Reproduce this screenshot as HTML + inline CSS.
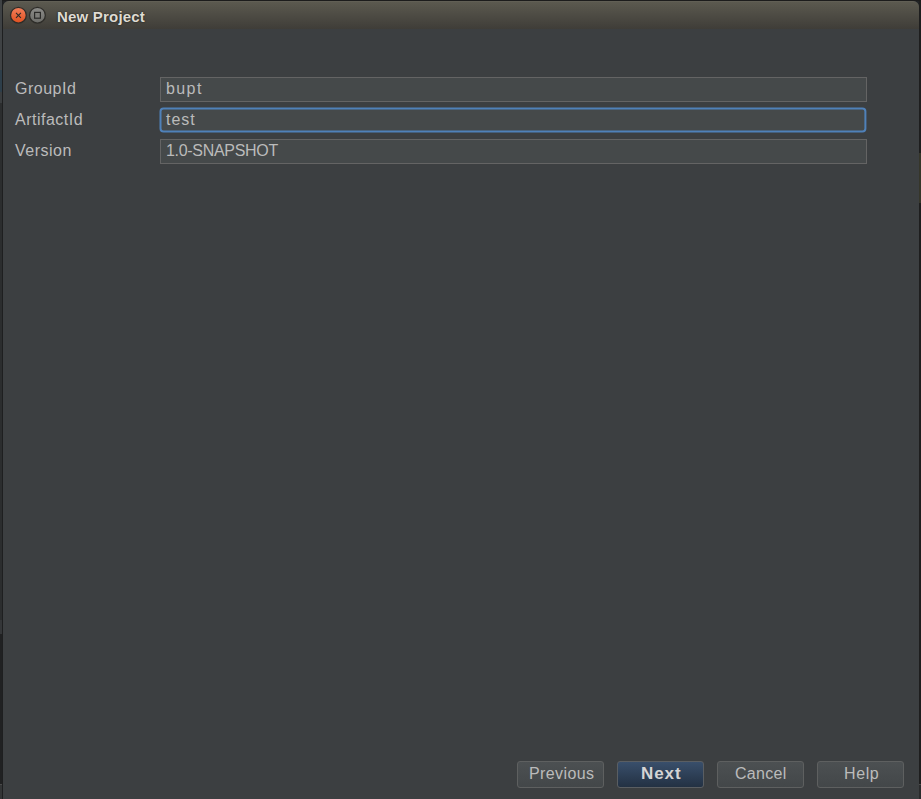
<!DOCTYPE html>
<html><head><meta charset="utf-8">
<style>
html,body{margin:0;padding:0;}
body{width:921px;height:799px;overflow:hidden;position:relative;background:#222426;font-family:"Liberation Sans",sans-serif;}
.a{position:absolute;}
.bgl{left:0;top:0;width:2px;height:799px;background:linear-gradient(#3f4244 0,#3f4244 70px,#2d3e4a 70px,#2d3e4a 92px,#3a3d3f 92px,#3a3d3f 103px,#2b2d2e 103px,#2b2d2e 620px,#343638 620px,#343638 634px,#202122 634px,#202122 784px,#4a4a4a 784px,#4a4a4a 785px,#333536 785px);}
.bgl2{left:2px;top:0;width:1px;height:799px;background:#1e1f20;}
.bgr{left:919px;top:0;width:2px;height:799px;background:linear-gradient(#1e1e1e 0,#1e1e1e 153px,#36362a 153px,#36362a 203px,#1e1e1e 203px,#1e1e1e 784px,#4a4a4a 784px,#4a4a4a 785px,#2a2b2c 785px);}
.topline{left:2px;top:0;width:919px;height:1px;background:#1c1c1c;}
.win{left:3px;top:1px;width:916px;height:798px;background:#3c3f41;border-radius:6px 6px 0 0;overflow:hidden;}
.title{left:0;top:0;width:916px;height:28px;background:linear-gradient(#615f55 0px,#615f55 1px,#5b594f 1px,#3f3d38 28px);}
.tt{left:57px;top:8px;color:#dfdbd2;font-weight:bold;font-size:15px;letter-spacing:0.2px;text-shadow:0 0 2px rgba(0,0,0,0.7);white-space:nowrap;}
.lbl{left:15px;color:#bbbbbb;font-size:16px;letter-spacing:0.5px;white-space:nowrap;}
.fld{left:160px;width:705px;height:23px;background:#45494a;border:1px solid #646464;}
.ft{color:#bbbbbb;font-size:16px;white-space:nowrap;}
.b{top:761px;width:85px;height:25px;border:1px solid #5e6060;border-radius:3px;background:linear-gradient(#4c5052,#434749);}
.b.def{background:linear-gradient(#394f6b,#233143);border-color:#5a5e62;}
.bt{color:#bbbbbb;font-size:16px;white-space:nowrap;}
</style></head><body>
<div class="a bgl"></div><div class="a bgl2"></div><div class="a bgr"></div><div class="a topline"></div>
<div class="a win">
  <div class="a title"></div>
</div>
<svg class="a" style="left:0;top:0" width="921" height="40">
  <defs>
    <linearGradient id="gc" x1="0" y1="0" x2="0" y2="1"><stop offset="0" stop-color="#f3805c"/><stop offset="1" stop-color="#e0501f"/></linearGradient>
    <linearGradient id="gm" x1="0" y1="0" x2="0" y2="1"><stop offset="0" stop-color="#8c8c89"/><stop offset="1" stop-color="#6c6c68"/></linearGradient>
  </defs>
  <circle cx="18.4" cy="15.2" r="7.9" fill="url(#gc)" stroke="#2e2d29" stroke-width="1.3"/>
  <path d="M16 12.9 L20.9 17.8 M20.9 12.9 L16 17.8" stroke="#2a2a28" stroke-width="1.1"/>
  <circle cx="37.45" cy="15.2" r="7.9" fill="url(#gm)" stroke="#2e2d29" stroke-width="1.3"/>
  <rect x="34.6" y="12.4" width="5.8" height="5.8" fill="#7e7e7a" stroke="#2a2a28" stroke-width="1.2"/>
</svg>
<div class="a tt">New Project</div>

<div class="a lbl" style="top:80px">GroupId</div>
<div class="a lbl" style="top:111px">ArtifactId</div>
<div class="a lbl" style="top:142px">Version</div>

<div class="a fld" style="top:77px"></div>
<div class="a fld" style="top:139px"></div>
<svg class="a" style="left:0;top:100px" width="921" height="40">
  <rect x="160.5" y="8.5" width="704.9" height="23" rx="3" fill="#45494a" stroke="#4f81b9" stroke-width="2"/>
</svg>
<div class="a ft" style="left:166px;top:80px;letter-spacing:1.4px">bupt</div>
<div class="a ft" style="left:166px;top:111px;letter-spacing:1px">test</div>
<div class="a ft" style="left:166px;top:142px;letter-spacing:-0.3px">1.0-SNAPSHOT</div>

<div class="a b" style="left:517px"></div>
<div class="a b def" style="left:617px"></div>
<div class="a b" style="left:717px"></div>
<div class="a b" style="left:817px"></div>
<div class="a bt" style="left:529px;top:765px;letter-spacing:0.4px">Previous</div>
<div class="a bt" style="left:641px;top:764px;font-size:17px;font-weight:bold;color:#d4d4d4;letter-spacing:0.9px">Next</div>
<div class="a bt" style="left:735px;top:765px;letter-spacing:0.3px">Cancel</div>
<div class="a bt" style="left:844px;top:765px;letter-spacing:0.6px">Help</div>
</body></html>
